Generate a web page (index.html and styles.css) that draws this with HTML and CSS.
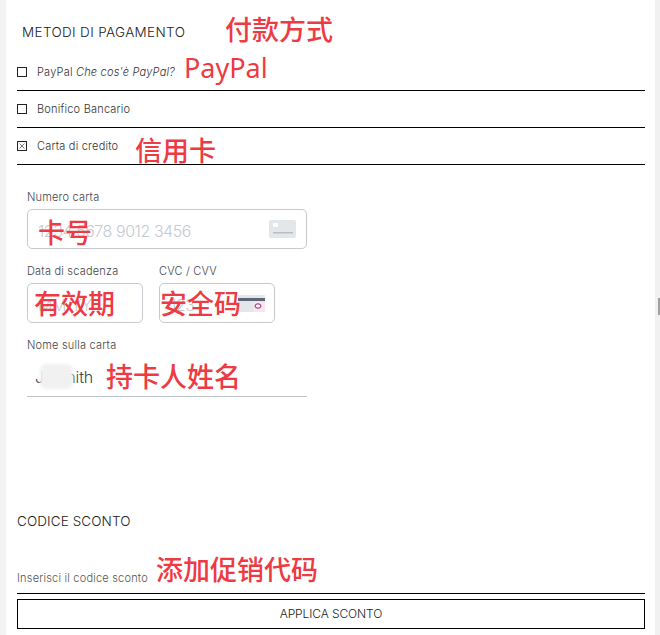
FILE: index.html
```html
<!DOCTYPE html>
<html>
    <head>
        <meta charset="UTF-8">
        <title>Metodi di pagamento</title>
        <link rel="stylesheet" href="styles.css">
    </head>
    <body>
        <div class="page">
            <div class="strip-left"></div>
            <div class="main">
                <h2 class="title title-pay">METODI DI PAGAMENTO</h2>
                <span class="note note-pay">付款方式</span>

                <div class="method">
                    <span class="check"></span>
                    <span>PayPal <em>Che cos'è PayPal?</em></span>
                    <span class="note note-paypal">PayPal</span>
                </div>
                <div class="method">
                    <span class="check"></span>
                    <span>Bonifico Bancario</span>
                </div>
                <div class="method">
                    <span class="check">
                        <svg width="8" height="8" viewBox="0 0 8 8"><path d="M1.5 1.5L6.5 6.5M6.5 1.5L1.5 6.5" stroke="#555" stroke-width="0.8" fill="none"/></svg>
                    </span>
                    <span>Carta di credito</span>
                    <span class="note note-credit">信用卡</span>
                </div>

                <div class="card-form">
                    <div class="field field-wide">
                        <label>Numero carta</label>
                        <div class="input-wrap">
                            <input class="box-input" type="text" placeholder="1234 5678 9012 3456">
                            <svg class="icon-card" width="27" height="18" viewBox="0 0 27 18">
                                <rect width="27" height="18" rx="2" fill="#e4e7ea"/>
                                <rect x="4" y="3" width="5" height="4" rx="1" fill="#fff"/>
                                <rect x="4" y="12" width="20" height="1.5" fill="#b8bdc3"/>
                            </svg>
                            <span class="note note-number">卡号</span>
                        </div>
                    </div>
                    <div class="field-pair">
                        <div class="field">
                            <label>Data di scadenza</label>
                            <div class="input-wrap">
                                <input class="box-input" type="text" placeholder="MM/YY">
                                <span class="note note-date">有效期</span>
                            </div>
                        </div>
                        <div class="field">
                            <label>CVC / CVV</label>
                            <div class="input-wrap">
                                <input class="box-input" type="text" placeholder="123">
                                <svg class="icon-cvc" width="27" height="17" viewBox="0 0 27 17">
                                    <rect width="27" height="17" rx="1" fill="#e4e7ea"/>
                                    <rect y="3" width="27" height="3" fill="#5c6675"/>
                                    <rect x="15" y="7" width="12" height="10" fill="#fbe4ee"/>
                                    <ellipse cx="20" cy="11" rx="3" ry="2.2" fill="#fdf3f7" stroke="#8a2a62" stroke-width="1"/>
                                </svg>
                                <span class="note note-cvc">安全码</span>
                            </div>
                        </div>
                    </div>
                    <div class="field field-wide">
                        <label>Nome sulla carta</label>
                        <div class="input-wrap">
                            <input class="line-input" type="text" value="J. Smith">
                            <span class="smudge"></span>
                            <span class="note note-name">持卡人姓名</span>
                        </div>
                    </div>
                </div>

                <h2 class="title title-code">CODICE SCONTO</h2>
                <div class="code-row">
                    <span>Inserisci il codice sconto</span>
                    <span class="note note-code">添加促销代码</span>
                </div>
                <button class="apply" type="button">APPLICA SCONTO</button>
            </div>
            <div class="strip-right">
                <div class="thumb"></div>
            </div>
        </div>
    </body>
</html>
```

FILE: styles.css
```css
* {
    box-sizing: border-box;
}

html, body {
    margin: 0;
    height: 635px;
    overflow: hidden;
    background: #fff;
}

body {
    font-family: "Inter", "Liberation Sans", sans-serif;
    font-weight: 300;
    font-size: 11px;
    letter-spacing: 0.2px;
    color: #333;
}

.page {
    display: flex;
    height: 635px;
}

.strip-left {
    width: 6px;
    background: #f3f3f3;
}

.main {
    position: relative;
    flex: 1;
    padding: 0 10px 0 11px;
}

.strip-right {
    position: relative;
    width: 5px;
    background: #f1f1f1;
}

.thumb {
    position: absolute;
    right: 0;
    top: 298px;
    width: 2px;
    height: 17px;
    background: #a0a0a0;
}

.title {
    margin: 0;
    font-size: 13.5px;
    font-weight: 300;
    letter-spacing: 0.1px;
    line-height: 16px;
    color: #222;
}

.title-pay {
    padding: 24px 0 14px 5px;
    letter-spacing: 0.35px;
}

.title-code {
    margin-top: 116px;
}

.method {
    position: relative;
    display: flex;
    align-items: center;
    gap: 10px;
    height: 37px;
    border-bottom: 1px solid #000;
}

.check {
    display: flex;
    align-items: center;
    justify-content: center;
    width: 10px;
    height: 10px;
    border: 1px solid #222;
}

.card-form {
    display: flex;
    flex-direction: column;
    gap: 15px;
    width: 280px;
    margin: 25px 0 0 10px;
}

.field label {
    display: block;
    margin-bottom: 5px;
    line-height: 14px;
    color: #444;
}

.field-pair {
    display: grid;
    grid-template-columns: 116px 116px;
    gap: 16px;
}

.input-wrap {
    position: relative;
}

.box-input, .line-input {
    display: block;
    width: 100%;
    height: 40px;
    padding: 3px 10px 0;
    font-family: inherit;
    font-weight: 300;
    font-size: 16px;
    letter-spacing: -0.45px;
    color: #444;
    background: #fff;
    outline: none;
}

.box-input {
    border: 1px solid #c6c9ce;
    border-radius: 5px;
}

.box-input::placeholder {
    color: #c5c9cf;
}

.line-input {
    padding: 0 8px;
    letter-spacing: -0.2px;
    border: 0;
    border-bottom: 1px solid #c0c3c8;
}

.icon-card {
    position: absolute;
    top: 11px;
    right: 11px;
}

.icon-cvc {
    position: absolute;
    top: 12px;
    right: 10px;
}

.smudge {
    position: absolute;
    left: 13px;
    top: 7px;
    width: 33px;
    height: 25px;
    border-radius: 6px;
    background: #f1f1f1;
    filter: blur(1.5px);
}

.code-row {
    position: relative;
    height: 65px;
    padding-top: 42px;
    line-height: 14px;
    color: #555;
    border-bottom: 1px solid #000;
}

.apply {
    display: block;
    width: 100%;
    height: 30px;
    margin-top: 5px;
    padding: 0 0 2px;
    font-family: inherit;
    font-weight: 300;
    font-size: 12px;
    letter-spacing: -0.1px;
    color: #222;
    background: #fff;
    border: 1px solid #000;
}

/* red notes written over the screenshot */
.note {
    position: absolute;
    font-family: "Noto Sans CJK SC", "Noto Sans", sans-serif;
    font-weight: 500;
    font-size: 27px;
    letter-spacing: 0;
    line-height: 36px;
    white-space: nowrap;
    color: #ee3a43;
}

.note-pay { left: 219px; top: 11px; }
.note-paypal { left: 167px; top: -4px; font-family: "Noto Sans", sans-serif; font-weight: 400; }
.note-credit { left: 118px; top: 4px; }
.note-number { left: 11px; top: 5px; }
.note-date { left: 7px; top: 2px; }
.note-cvc { left: 1px; top: 2px; }
.note-name { left: 79px; top: 1px; }
.note-code { left: 139px; top: 22px; }
```
